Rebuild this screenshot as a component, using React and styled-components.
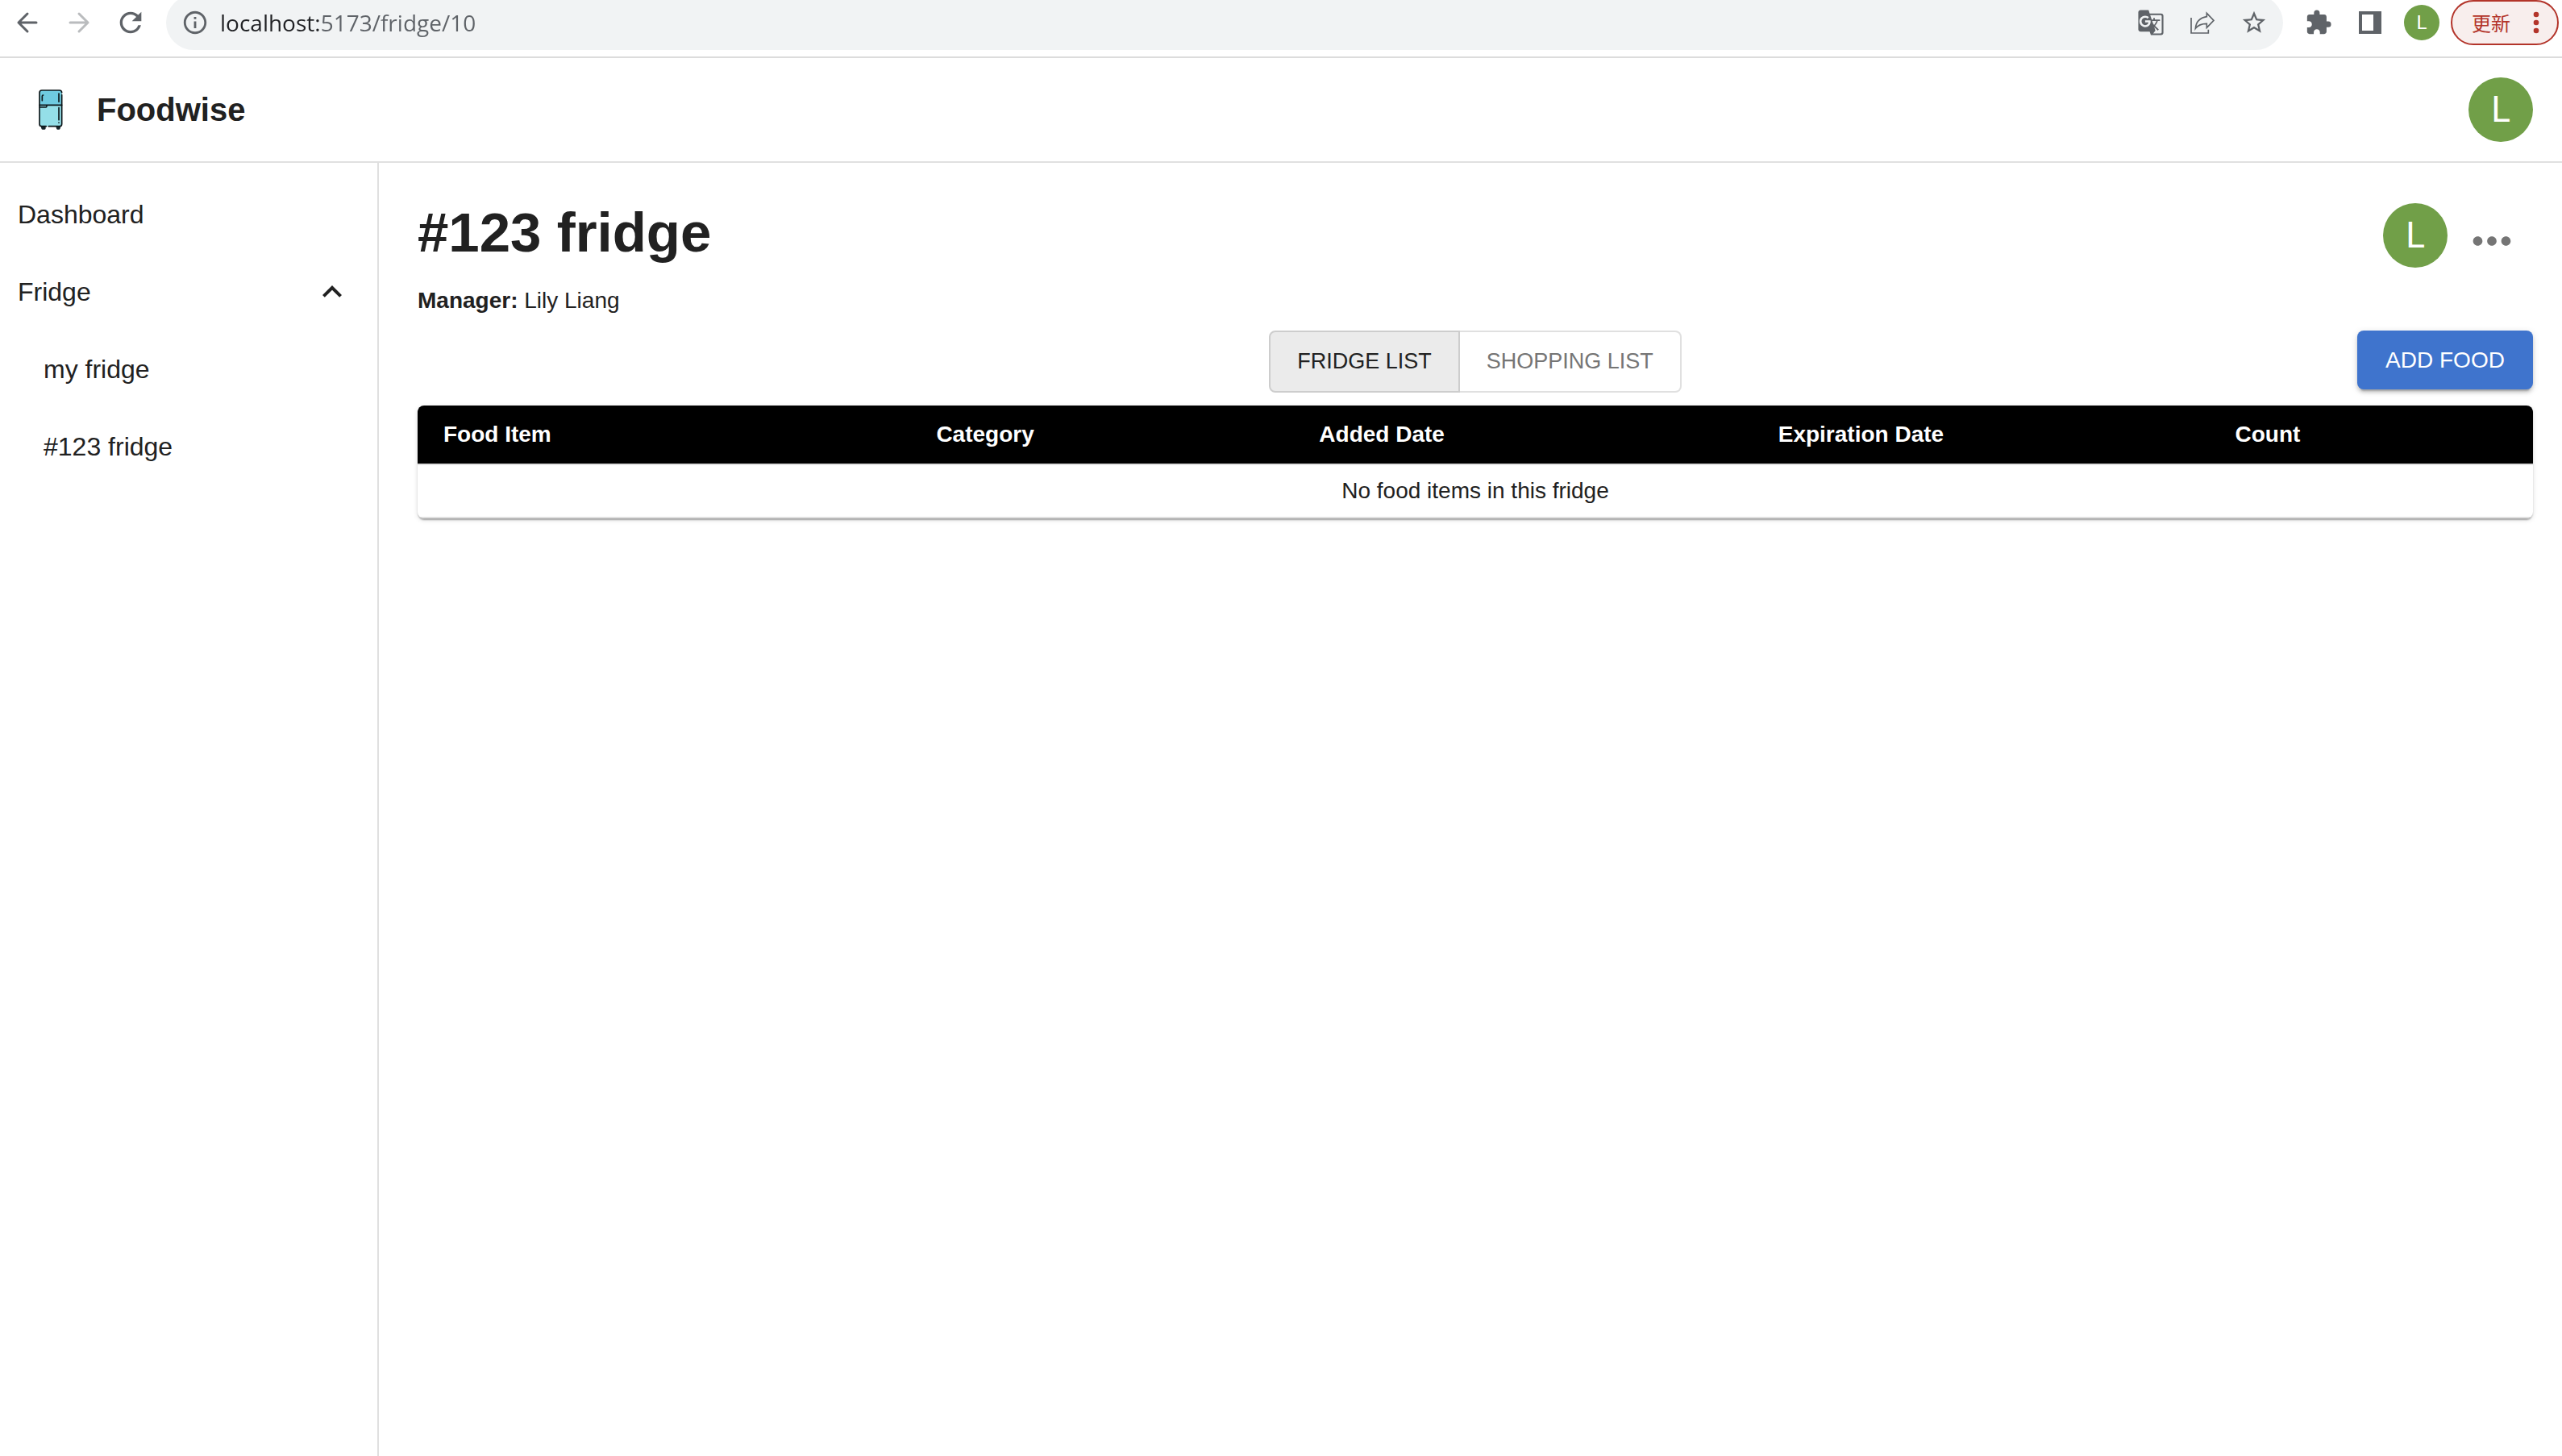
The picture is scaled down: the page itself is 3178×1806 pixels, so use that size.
import React, { useState } from "react";
import styled, { createGlobalStyle } from "styled-components";
import {
  MdExpandLess,
  MdExtension,
  MdGTranslate,
  MdInfoOutline,
  MdMoreHoriz,
  MdRefresh,
  MdStarBorder,
} from "react-icons/md";

const sans = '"Liberation Sans", Arial, sans-serif';

const GlobalStyle = createGlobalStyle`
  *, *::before, *::after { box-sizing: border-box; }
  body { margin: 0; background: #fff; color: #212121; font-family: ${sans}; }
  button, input { font-family: inherit; margin: 0; }
  button { cursor: pointer; }
  svg { display: block; flex: none; }
`;

const Page = styled.div`
  display: flex;
  flex-direction: column;
  min-height: 100vh;
`;

/* Browser bar */

const BrowserBar = styled.div`
  display: flex;
  align-items: center;
  height: 72px;
  padding: 0 4px 14px 2px;
  border-bottom: 2px solid #dcdcdc;
`;

const ToolButton = styled.button`
  display: flex;
  align-items: center;
  justify-content: center;
  flex: none;
  width: ${(p) => (p.$narrow ? 56 : 64)}px;
  height: 56px;
  padding: 0;
  border: 0;
  background: none;
  color: ${(p) => (p.$muted ? "#babcbe" : "#5f6368")};
`;

const AddressBar = styled.form`
  display: flex;
  align-items: center;
  flex: 1;
  height: 68px;
  margin: 0 12px;
  padding: 0 4px 0 8px;
  border-radius: 34px;
  background: #f1f3f4;
`;

const AddressInput = styled.input`
  flex: 1;
  min-width: 0;
  height: 44px;
  padding: 0 3px;
  border: 0;
  outline: 0;
  font-family: "Open Sans", "Noto Sans", sans-serif;
  font-size: 28px;
  color: #202124;
  background: linear-gradient(to right, #202124 126px, #5f6368 126px);
  background-clip: text;
  -webkit-text-fill-color: transparent;
`;

const UpdateButton = styled.button`
  display: flex;
  align-items: center;
  justify-content: space-between;
  flex: none;
  width: 134px;
  height: 56px;
  margin-left: 4px;
  padding: 0 22px 0 24px;
  border: 2px solid #b3342a;
  border-radius: 28px;
  background: #f8eeed;
  color: #b3342a;
  font-family: "Noto Sans CJK SC", sans-serif;
  font-size: 24px;
  font-weight: 400;
  line-height: 36px;
`;

const Avatar = styled.span`
  display: flex;
  align-items: center;
  justify-content: center;
  flex: none;
  width: ${(p) => (p.$small ? 44 : 80)}px;
  height: ${(p) => (p.$small ? 44 : 80)}px;
  border-radius: 50%;
  background: #719f48;
  color: #fff;
  font-family: Roboto, sans-serif;
  font-size: ${(p) => (p.$small ? 24 : 44)}px;
  line-height: 1;
`;

/* App shell */

const AppHeader = styled.header`
  display: flex;
  align-items: center;
  justify-content: space-between;
  height: 130px;
  padding: 0 36px 0 48px;
  border-bottom: 2px solid #e0e0e0;
`;

const Brand = styled.a`
  display: flex;
  align-items: center;
  gap: 42px;
  color: inherit;
  font-size: 40px;
  font-weight: 700;
  line-height: 64px;
  text-decoration: none;
`;

const Body = styled.div`
  display: flex;
  flex: 1;
`;

const Sidebar = styled.nav`
  flex: none;
  width: 470px;
  padding-top: 16px;
  border-right: 2px solid #e0e0e0;
`;

const NavList = styled.ul`
  margin: 0;
  padding: 0;
  list-style: none;
`;

const NavLink = styled.a`
  display: flex;
  align-items: center;
  height: 96px;
  padding: 0 32px 0 ${(p) => (p.$nested ? 54 : 22)}px;
  color: inherit;
  font-size: 32px;
  text-decoration: none;
`;

const NavToggle = styled.button`
  display: flex;
  align-items: center;
  justify-content: space-between;
  width: 100%;
  height: 96px;
  padding: 0 32px 0 22px;
  border: 0;
  background: none;
  color: inherit;
  font-size: 32px;
  text-align: left;
`;

const Main = styled.main`
  flex: 1;
  min-width: 0;
  padding: 48px 36px 48px 48px;
`;

const TitleRow = styled.div`
  display: flex;
  align-items: flex-start;
  justify-content: space-between;
`;

const Title = styled.h1`
  margin: 0;
  font-size: 69px;
  font-weight: 700;
  line-height: 78px;
`;

const Manager = styled.p`
  margin: 24px 0 0;
  font-size: 28px;
  line-height: 42px;
`;

const TitleActions = styled.div`
  display: flex;
  align-items: flex-start;
  gap: 4px;
  padding-top: 2px;
`;

const MoreButton = styled.button`
  padding: 12px 16px;
  border: 0;
  background: none;
  color: #757575;
`;

const Toolbar = styled.div`
  display: grid;
  grid-template-columns: 1fr auto 1fr;
  align-items: start;
  margin: 16px 0;
`;

const ToggleGroup = styled.div`
  display: flex;
  grid-column: 2;
`;

const ToggleButton = styled.button`
  height: 77px;
  padding: 0 33px;
  border: 2px solid ${(p) => (p.$selected ? "#cdcdcd" : "#e0e0e0")};
  background: ${(p) => (p.$selected ? "#ebebeb" : "#fff")};
  color: ${(p) => (p.$selected ? "#212121" : "#757575")};
  font-size: 27px;
  text-transform: uppercase;

  &:first-child {
    border-radius: 8px 0 0 8px;
  }
  &:last-child {
    border-left: 0;
    border-radius: 0 8px 8px 0;
  }
`;

const AddButton = styled.button`
  justify-self: end;
  min-width: 218px;
  height: 73px;
  padding: 0 32px;
  border: 0;
  border-radius: 8px;
  background: #3f74cd;
  color: #fff;
  font-size: 28px;
  text-transform: uppercase;
  box-shadow: 0 6px 2px -4px rgba(0, 0, 0, 0.2), 0 4px 4px rgba(0, 0, 0, 0.14),
    0 2px 10px rgba(0, 0, 0, 0.12);
`;

const TableCard = styled.div`
  overflow: hidden;
  border-radius: 8px;
  box-shadow: 0 4px 2px -2px rgba(0, 0, 0, 0.2), 0 2px 2px rgba(0, 0, 0, 0.14),
    0 2px 6px rgba(0, 0, 0, 0.12);
`;

const Table = styled.table`
  width: 100%;
  table-layout: fixed;
  border-collapse: separate;
  border-spacing: 0;
  font-size: 28px;
`;

const HeadCell = styled.th`
  width: ${(p) => p.$width};
  padding: 16px 32px;
  border-bottom: 2px solid #e0e0e0;
  background: #000;
  background-clip: padding-box;
  color: #fff;
  font-weight: 700;
  line-height: 40px;
  text-align: left;
`;

const EmptyCell = styled.td`
  padding: 12px 32px;
  border-bottom: 2px solid #e0e0e0;
  line-height: 40px;
  text-align: center;
`;

const ArrowIcon = ({ forward }) => (
  <svg width="28" height="28" viewBox="0 0 28 28" fill="none" stroke="currentColor" strokeWidth="3" strokeLinecap="round" strokeLinejoin="round">
    <path d={forward ? "M3 14H25M14 3 25 14 14 25" : "M25 14H3M14 3 3 14 14 25"} />
  </svg>
);

const ShareIcon = () => (
  <svg width="30" height="28" viewBox="0 0 90 84" fill="none" stroke="currentColor" strokeWidth="5">
    <path d="M3 24V81H67V68" />
    <path d="M61 7 87 34 61 61V46C42 46 28 52 19 64 21 40 36 24 61 20Z" />
  </svg>
);

const SidePanelIcon = () => (
  <svg width="28" height="28" viewBox="0 0 28 28" fill="currentColor" fillRule="evenodd">
    <path d="M0 0H28V28H0ZM4 4V24H18V4Z" />
  </svg>
);

const DotsIcon = () => (
  <svg width="8" height="28" viewBox="0 0 8 28" fill="currentColor">
    <circle cx="4" cy="4" r="3.3" />
    <circle cx="4" cy="14" r="3.3" />
    <circle cx="4" cy="24" r="3.3" />
  </svg>
);

const FridgeLogo = () => (
  <svg width="30" height="50" viewBox="0 0 90 150" aria-hidden="true">
    <path d="M8 137h18v8q0 4-4 4H14q-4 0-4-4ZM64 137h18l-2 8q0 4-4 4h-6q-4 0-4-4Z" fill="#16242a" />
    <path d="M3 58V12Q3 3 12 3H77Q86 3 86 12V58Z" fill="#6fcbe0" />
    <path d="M3 58H86V128Q86 137 77 137H12Q3 137 3 128Z" fill="#94dfe8" />
    <g fill="none" stroke="#0d171a" strokeWidth="5" strokeLinecap="round" strokeLinejoin="round">
      <path d="M28 137H12Q3 137 3 128V12Q3 3 12 3H77Q86 3 86 12M86 20V128Q86 137 77 137H37" />
      <path d="M3 58H86M4 66H28Q30 66 30 60" />
      <path d="M13 41V25Q13 21 17 21M75 15V46M75 68V113M75 123V124" />
    </g>
  </svg>
);

const columns = [
  { label: "Food Item", width: "23.3%" },
  { label: "Category", width: "18.1%" },
  { label: "Added Date", width: "21.7%" },
  { label: "Expiration Date", width: "21.6%" },
  { label: "Count", width: "15.3%" },
];

const fridges = ["my fridge", "#123 fridge"];
const lists = ["Fridge list", "Shopping list"];

export default function App() {
  const [open, setOpen] = useState(true);
  const [list, setList] = useState(lists[0]);

  return (
    <Page>
      <GlobalStyle />
      <BrowserBar>
        <ToolButton aria-label="Back"><ArrowIcon /></ToolButton>
        <ToolButton aria-label="Forward" $muted><ArrowIcon forward /></ToolButton>
        <ToolButton aria-label="Reload"><MdRefresh size={40} /></ToolButton>
        <AddressBar onSubmit={(e) => e.preventDefault()}>
          <ToolButton type="button" aria-label="Site information" $narrow><MdInfoOutline size={34} /></ToolButton>
          <AddressInput aria-label="Address" defaultValue="localhost:5173/fridge/10" />
          <ToolButton type="button" aria-label="Translate"><MdGTranslate size={34} /></ToolButton>
          <ToolButton type="button" aria-label="Share"><ShareIcon /></ToolButton>
          <ToolButton type="button" aria-label="Bookmark"><MdStarBorder size={34} /></ToolButton>
        </AddressBar>
        <ToolButton aria-label="Extensions"><MdExtension size={34} /></ToolButton>
        <ToolButton aria-label="Side panel"><SidePanelIcon /></ToolButton>
        <ToolButton aria-label="Profile"><Avatar $small>L</Avatar></ToolButton>
        <UpdateButton>更新<DotsIcon /></UpdateButton>
      </BrowserBar>

      <AppHeader>
        <Brand href="#"><FridgeLogo />Foodwise</Brand>
        <Avatar>L</Avatar>
      </AppHeader>

      <Body>
        <Sidebar>
          <NavList>
            <li><NavLink href="#dashboard">Dashboard</NavLink></li>
            <li>
              <NavToggle aria-expanded={open} onClick={() => setOpen(!open)}>
                Fridge<MdExpandLess size={48} />
              </NavToggle>
              {open && (
                <NavList>
                  {fridges.map((name) => (
                    <li key={name}><NavLink href="#fridge" $nested>{name}</NavLink></li>
                  ))}
                </NavList>
              )}
            </li>
          </NavList>
        </Sidebar>

        <Main>
          <TitleRow>
            <div>
              <Title>#123 fridge</Title>
              <Manager><strong>Manager:</strong> Lily Liang</Manager>
            </div>
            <TitleActions>
              <Avatar>L</Avatar>
              <MoreButton aria-label="More options"><MdMoreHoriz size={70} /></MoreButton>
            </TitleActions>
          </TitleRow>

          <Toolbar>
            <ToggleGroup role="group" aria-label="List">
              {lists.map((name) => (
                <ToggleButton key={name} $selected={name === list} aria-pressed={name === list} onClick={() => setList(name)}>
                  {name}
                </ToggleButton>
              ))}
            </ToggleGroup>
            <AddButton>Add food</AddButton>
          </Toolbar>

          <TableCard>
            <Table>
              <thead>
                <tr>
                  {columns.map((c) => (
                    <HeadCell key={c.label} scope="col" $width={c.width}>{c.label}</HeadCell>
                  ))}
                </tr>
              </thead>
              <tbody>
                <tr><EmptyCell colSpan={columns.length}>No food items in this fridge</EmptyCell></tr>
              </tbody>
            </Table>
          </TableCard>
        </Main>
      </Body>
    </Page>
  );
}
